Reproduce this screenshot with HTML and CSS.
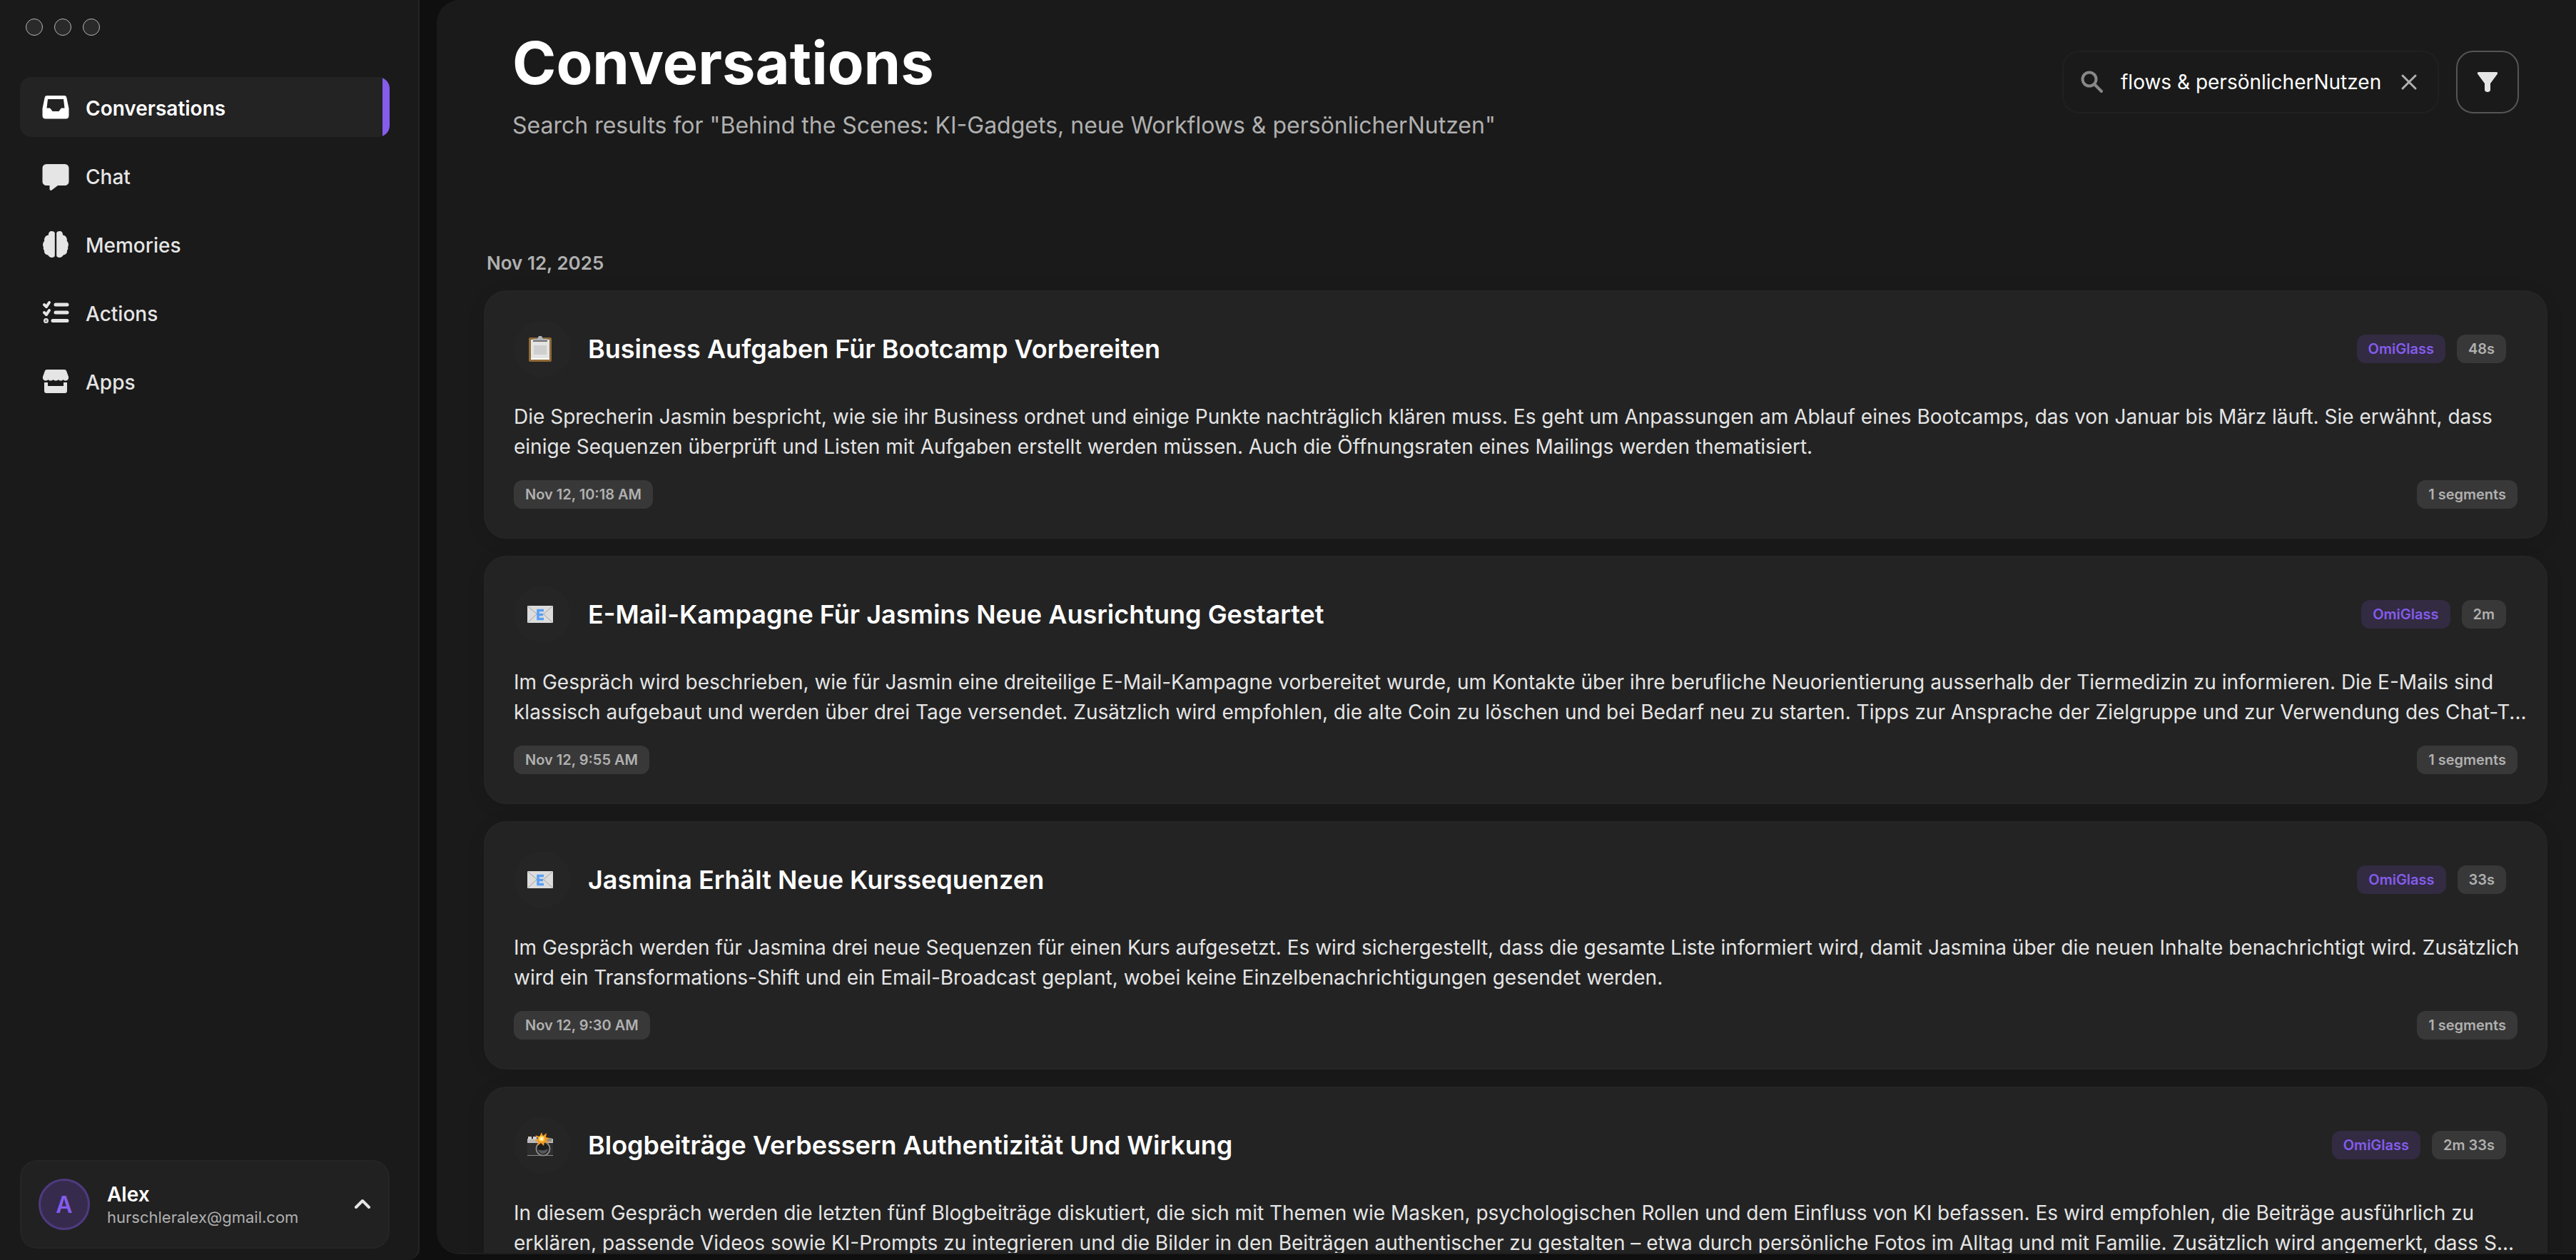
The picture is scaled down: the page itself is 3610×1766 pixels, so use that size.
FILE: index.html
```
<!DOCTYPE html>
<html lang="en">
<head>
    <meta charset="UTF-8">
    <meta name="viewport" content="width=device-width, initial-scale=1.0">
    <title>Conversations</title>
    <link rel="stylesheet" href="styles.css">
</head>
<body>

    <!-- Sidebar -->
    <aside class="sidebar">
        <div class="window-buttons">
            <button type="button" aria-label="Close"></button>
            <button type="button" aria-label="Minimize"></button>
            <button type="button" aria-label="Zoom"></button>
        </div>

        <nav class="nav">
            <a href="#conversations" class="nav-item active">
                <svg viewBox="0 0 36 36"><path fill-rule="evenodd" d="M6 2h24c2 0 3 1 3.400 3L36.500 20v10c0 3-1.500 4.500-4.500 4.500H4C1 34.500-.5 33 -.5 30V20L2.600 5C3 3 4 2 6 2zM7 7L5.500 19.500H9c1.200 0 1.800.6 2.300 1.600L13.500 24h9l2.200-2.900c.5-1 1.100-1.600 2.300-1.600h3.500L29 7z"/></svg>
                <span>Conversations</span>
            </a>
            <a href="#chat" class="nav-item">
                <svg viewBox="0 0 36 36"><path d="M6 2h24c4 0 6.500 2 6.500 6v18c0 4-2.500 6-6.500 6h-9l-8.500 6.500c-2 1-3 0-3-2V32H6c-4 0-6.500-2-6.500-6V8c0-4 2.500-6 6.500-6z"/></svg>
                <span>Chat</span>
            </a>
            <a href="#memories" class="nav-item">
                <svg viewBox="0 0 36 36"><path d="M12.500 0C15 0 16.800 1 16.800 3v31c0 2-1.800 3-4.300 3-2.300 0-3.800-1.300-5.300-3.500C4 33 1.500 30.500 2 27 .5 25.500.5 23.500 1 22.500-.5 20-.2 16 2.200 14 1.500 10 3.500 6 8 5.500 7.800 2 9.500 0 12.500 0zM23.500 0C21 0 19.200 1 19.200 3v31c0 2 1.800 3 4.300 3 2.300 0 3.800-1.300 5.300-3.500 3.200-.5 5.700-3 5.200-6.500 1.500-1.500 1.500-3.500 1-4.500 1.500-2.500 1.200-6.500-1.200-8.500.7-4-1.300-8-5.800-8.500C28.200 2 26.500 0 23.500 0z"/></svg>
                <span>Memories</span>
            </a>
            <a href="#actions" class="nav-item">
                <svg viewBox="0 0 36 36" class="line-icon"><path d="M18 7h16M18 18h16M14 29.500h20"/><path class="tick" d="M2 7l3 3 4-6M2 18l3 3 4-6"/><circle cx="4.500" cy="29.500" r="1"/></svg>
                <span>Actions</span>
            </a>
            <a href="#apps" class="nav-item">
                <svg viewBox="0 0 36 36"><path d="M6 2h24c2 0 3 1 3.500 3L36 12c.5 3-1 5.500-4 5.500-1.600 0-2.600-.5-3.500-1.500-1.500 2-5 2-6.700 0-1.800 2-5.500 2-7.300 0-1.800 2-5.300 2-7 0-1 1-2 1.500-3.500 1.500-3 0-4.500-2.500-4-5.500L2.500 5C3 3 4 2 6 2z"/><path d="M2 20h5v5h22v-5h5v11c0 3-1 4-3 4H5c-2 0-3-1-3-4z"/></svg>
                <span>Apps</span>
            </a>
        </nav>

        <button type="button" class="profile">
            <span class="avatar">A</span>
            <span class="profile-text">
                <span class="profile-name">Alex</span>
                <span class="profile-mail">hurschleralex@gmail.com</span>
            </span>
            <svg class="chevron" viewBox="0 0 24 24"><path d="M3 16l9-9 9 9"/></svg>
        </button>
    </aside>

    <!-- Conversation list -->
    <main class="panel">
        <header class="page-header">
            <div>
                <h1>Conversations</h1>
                <p class="subtitle">Search results for "Behind the Scenes: KI-Gadgets, neue Workflows &amp; persönlicherNutzen"</p>
            </div>
            <div class="tools">
                <div class="search">
                    <svg class="search-icon" viewBox="0 0 32 32"><circle cx="12" cy="12" r="9.500"/><path d="M19.500 19.500l9.500 9.500"/></svg>
                    <input type="text" aria-label="Search conversations" value="flows &amp; persönlicherNutzen">
                    <button type="button" class="clear" aria-label="Clear search">
                        <svg viewBox="0 0 24 24"><path d="M3 3l18 18M21 3L3 21"/></svg>
                    </button>
                </div>
                <button type="button" class="filter" aria-label="Filter">
                    <svg viewBox="0 0 32 32"><path d="M3.500 2h25c1.500 0 2.200 1.500 1.300 2.800L20 18v9c0 4-8 4-8 0v-9L2.200 4.800C1.300 3.500 2 2 3.500 2z"/></svg>
                </button>
            </div>
        </header>

        <section class="day">
            <h2 class="day-title">Nov 12, 2025</h2>

            <article class="card">
                <div class="card-header">
                    <span class="emoji">
                        <svg viewBox="0 0 36 36"><rect x="2" y="2" width="32" height="34" rx="2" fill="#8f6a37"/><path d="M5 5h26v28H5z" fill="#e4e4e4"/><path d="M9 13h18v13H9z" fill="#cfcfcf"/><path d="M5 31h26v2H5z" fill="#fff"/><path d="M8 6V4h6l2-4h4l2 4h6v2z" fill="#aeb4bd"/><path d="M8 6h20v2H8z" fill="#77736f"/></svg>
                    </span>
                    <h3>Business Aufgaben Für Bootcamp Vorbereiten</h3>
                    <span class="chip source">OmiGlass</span>
                    <span class="chip">48s</span>
                </div>
                <p class="summary">Die Sprecherin Jasmin bespricht, wie sie ihr Business ordnet und einige Punkte nachträglich klären muss. Es geht um Anpassungen am Ablauf eines Bootcamps, das von Januar bis März läuft. Sie erwähnt, dass einige Sequenzen überprüft und Listen mit Aufgaben erstellt werden müssen. Auch die Öffnungsraten eines Mailings werden thematisiert.</p>
                <div class="card-footer">
                    <time class="chip">Nov 12, 10:18 AM</time>
                    <span class="chip">1 segments</span>
                </div>
            </article>

            <article class="card">
                <div class="card-header">
                    <span class="emoji">
                        <svg viewBox="0 0 36 36"><rect y="6" width="36" height="24" rx="1" fill="#dcdcdc"/><path d="M1 7l14 12h6L35 7M1 29l12-11M35 29L23 18" fill="none" stroke="#a3a3a3"/><path d="M23 12.500h-8v12h8M15 18.500h7" fill="none" stroke="#57a0f5" stroke-width="3.500"/></svg>
                    </span>
                    <h3>E-Mail-Kampagne Für Jasmins Neue Ausrichtung Gestartet</h3>
                    <span class="chip source">OmiGlass</span>
                    <span class="chip">2m</span>
                </div>
                <p class="summary">Im Gespräch wird beschrieben, wie für Jasmin eine dreiteilige E-Mail-Kampagne vorbereitet wurde, um Kontakte über ihre berufliche Neuorientierung ausserhalb der Tiermedizin zu informieren. Die E-Mails sind klassisch aufgebaut und werden über drei Tage versendet. Zusätzlich wird empfohlen, die alte Coin zu löschen und bei Bedarf neu zu starten. Tipps zur Ansprache der Zielgruppe und zur Verwendung des Chat-T...</p>
                <div class="card-footer">
                    <time class="chip">Nov 12, 9:55 AM</time>
                    <span class="chip">1 segments</span>
                </div>
            </article>

            <article class="card">
                <div class="card-header">
                    <span class="emoji">
                        <svg viewBox="0 0 36 36"><rect y="6" width="36" height="24" rx="1" fill="#dcdcdc"/><path d="M1 7l14 12h6L35 7M1 29l12-11M35 29L23 18" fill="none" stroke="#a3a3a3"/><path d="M23 12.500h-8v12h8M15 18.500h7" fill="none" stroke="#57a0f5" stroke-width="3.500"/></svg>
                    </span>
                    <h3>Jasmina Erhält Neue Kurssequenzen</h3>
                    <span class="chip source">OmiGlass</span>
                    <span class="chip">33s</span>
                </div>
                <p class="summary">Im Gespräch werden für Jasmina drei neue Sequenzen für einen Kurs aufgesetzt. Es wird sichergestellt, dass die gesamte Liste informiert wird, damit Jasmina über die neuen Inhalte benachrichtigt wird. Zusätzlich wird ein Transformations-Shift und ein Email-Broadcast geplant, wobei keine Einzelbenachrichtigungen gesendet werden.</p>
                <div class="card-footer">
                    <time class="chip">Nov 12, 9:30 AM</time>
                    <span class="chip">1 segments</span>
                </div>
            </article>

            <article class="card">
                <div class="card-header">
                    <span class="emoji">
                        <svg viewBox="0 0 36 36"><rect y="9" width="36" height="24" rx="1" fill="#2e2e2e"/><path d="M0 9h36v6H0z" fill="#b9b9b9"/><path d="M1 6h5v4H1zM8 6h5v4H8z" fill="#cfcfcf"/><path d="M27 8h7v5h-7z" fill="#8d8a80"/><path d="M0 32h36v1H0z" fill="#8a8a8a"/><circle cx="22" cy="23" r="10.500" fill="#858585"/><circle cx="22" cy="23" r="8.500" fill="#1e1e1e"/><path d="M15 24c4 2 10 2 14-1-1 5-4 7-7 7s-6-2-7-6z" fill="#565b60"/><path d="M20 0l2 5 5-4-1 6 5 1-4 3 3 4-6-1-1 5-4-4-5 4 1-6-5-1 5-3-4-5 6 2z" fill="#f09a26"/><circle cx="20" cy="9" r="4" fill="#ffd24d"/><circle cx="20" cy="9" r="2" fill="#fffbe0"/></svg>
                    </span>
                    <h3>Blogbeiträge Verbessern Authentizität Und Wirkung</h3>
                    <span class="chip source">OmiGlass</span>
                    <span class="chip">2m 33s</span>
                </div>
                <p class="summary">In diesem Gespräch werden die letzten fünf Blogbeiträge diskutiert, die sich mit Themen wie Masken, psychologischen Rollen und dem Einfluss von KI befassen. Es wird empfohlen, die Beiträge ausführlich zu erklären, passende Videos sowie KI-Prompts zu integrieren und die Bilder in den Beiträgen authentischer zu gestalten – etwa durch persönliche Fotos im Alltag und mit Familie. Zusätzlich wird angemerkt, dass S...</p>
            </article>
        </section>
    </main>

</body>
</html>
```
FILE: styles.css
```
* {
    box-sizing: border-box;
}
body {
    margin: 0;
    height: 100vh;
    overflow: hidden;
    display: flex;
    gap: 24px;
    background-color: #0f0f0f;
    color: #fff;
    font-family: Inter, "Liberation Sans", sans-serif;
    font-size: 28px;
}
h1, h2, h3, p {
    margin: 0;
}
button, input {
    font-family: inherit;
    color: inherit;
}
svg {
    display: block;
    flex-shrink: 0;
    overflow: visible;
    fill: currentColor;
}

/* Sidebar */
.sidebar {
    width: 588px;
    flex-shrink: 0;
    display: flex;
    flex-direction: column;
    padding: 26px 40px 16px 28px;
    background-color: #1a1a1a;
    border-right: 2px solid #242424;
    border-bottom-right-radius: 16px;
}
.window-buttons {
    display: flex;
    gap: 16px;
    padding-left: 8px;
}
.window-buttons button {
    width: 24px;
    height: 24px;
    padding: 0;
    border: 1px solid #b5b5b5;
    border-radius: 50%;
    background-color: #2a2a2a;
}
.nav {
    display: flex;
    flex-direction: column;
    gap: 12px;
    margin-top: 58px;
}
.nav-item {
    display: flex;
    align-items: center;
    gap: 24px;
    height: 84px;
    padding: 0 32px;
    border-radius: 16px;
    color: #e5e5e5;
    font-weight: 500;
    text-decoration: none;
}
.nav-item svg {
    width: 36px;
    height: 36px;
}
.nav-item span {
    padding-top: 4px;
}
.nav-item.active {
    background-color: #232323;
    background-image: linear-gradient(#855cec, #855cec);
    background-position: right;
    background-repeat: no-repeat;
    background-size: 10px 100%;
    color: #fff;
    font-weight: 600;
}
.line-icon {
    fill: currentColor;
    stroke: currentColor;
    stroke-width: 5;
    stroke-linecap: round;
    stroke-linejoin: round;
}
.line-icon .tick {
    fill: none;
    stroke-width: 4;
}
.profile {
    display: flex;
    align-items: center;
    gap: 24px;
    height: 124px;
    margin-top: auto;
    padding: 0 24px;
    border: 2px solid #252525;
    border-radius: 24px;
    background-color: #212121;
    text-align: left;
}
.avatar {
    display: flex;
    align-items: center;
    justify-content: center;
    width: 72px;
    height: 72px;
    border: 3px solid #4e3a80;
    border-radius: 50%;
    background-color: #362b4c;
    color: #855cec;
    font-size: 32px;
    font-weight: 600;
}
.profile-text {
    flex: 1;
    display: flex;
    flex-direction: column;
}
.profile-name {
    font-size: 28px;
    font-weight: 600;
    line-height: 36px;
}
.profile-mail {
    color: #b0b0b0;
    font-size: 22px;
    line-height: 28px;
}
.chevron {
    width: 24px;
    height: 24px;
    fill: none;
    stroke: #e5e5e5;
    stroke-width: 4;
    stroke-linecap: round;
    stroke-linejoin: round;
}

/* Main panel */
.panel {
    flex: 1;
    min-width: 0;
    margin-bottom: 8px;
    padding: 38px 40px 0 66px;
    overflow: hidden;
    background-color: #1a1a1a;
    border-bottom: 2px solid #1e1e1e;
    border-radius: 32px 0 0 32px;
}
.page-header {
    display: flex;
    justify-content: space-between;
    align-items: flex-start;
    padding: 0 40px;
}
h1 {
    font-size: 83px;
    font-weight: 700;
    line-height: 100px;
}
.subtitle {
    margin-top: 18px;
    color: #b0b0b0;
    font-size: 32px;
    line-height: 40px;
}
.tools {
    display: flex;
    gap: 24px;
    margin-top: 33px;
}
.search {
    display: flex;
    align-items: center;
    gap: 24px;
    width: 528px;
    height: 88px;
    padding: 0 28px 0 24px;
    border: 2px solid #202020;
    border-radius: 24px;
}
.search input {
    flex: 1;
    min-width: 0;
    padding: 0;
    border: none;
    outline: none;
    background: none;
    font-size: 28px;
}
.search-icon {
    width: 32px;
    height: 32px;
    fill: none;
    stroke: #888;
    stroke-width: 4;
    stroke-linecap: round;
}
.clear {
    padding: 0;
    border: none;
    background: none;
    color: #b0b0b0;
}
.clear svg {
    width: 24px;
    height: 24px;
    stroke: currentColor;
    stroke-width: 3;
    stroke-linecap: round;
}
.filter {
    display: flex;
    align-items: center;
    justify-content: center;
    width: 88px;
    height: 88px;
    padding: 0;
    border: 2px solid #555;
    border-radius: 24px;
    background: none;
    color: #e5e5e5;
}
.filter svg {
    width: 32px;
    height: 32px;
}

/* Cards */
.day {
    display: flex;
    flex-direction: column;
    gap: 24px;
    margin-top: 159px;
}
.day-title {
    padding-left: 4px;
    color: #b0b0b0;
    font-size: 26px;
    font-weight: 600;
    line-height: 28px;
}
.card {
    padding: 40px;
    border: 2px solid #252525;
    border-radius: 32px;
    background-color: #232323;
    box-shadow: 0 4px 24px rgba(0, 0, 0, 0.1);
}
.card-header {
    display: flex;
    align-items: center;
    gap: 16px;
    padding-right: 16px;
}
.emoji {
    display: flex;
    align-items: center;
    justify-content: center;
    width: 80px;
    height: 80px;
    padding-right: 6px;
    border-radius: 50%;
    background-color: #252525;
}
.emoji svg {
    width: 36px;
    height: 36px;
}
h3 {
    flex: 1;
    padding-left: 8px;
    font-size: 36px;
    font-weight: 600;
    line-height: 44px;
}
/* runs a little into the card padding, two lines at most */
.summary {
    display: -webkit-box;
    -webkit-box-orient: vertical;
    -webkit-line-clamp: 2;
    overflow: hidden;
    margin-top: 34px;
    margin-right: -16px;
    color: #e5e5e5;
    line-height: 42px;
}
.card-footer {
    display: flex;
    justify-content: space-between;
    margin-top: 26px;
}
.chip {
    height: 40px;
    padding: 0 16px;
    border-radius: 12px;
    background-color: #383838;
    color: #b0b0b0;
    font-size: 20px;
    font-weight: 600;
    line-height: 40px;
}
.chip.source {
    background-color: #322b42;
    color: #855cec;
}
```
